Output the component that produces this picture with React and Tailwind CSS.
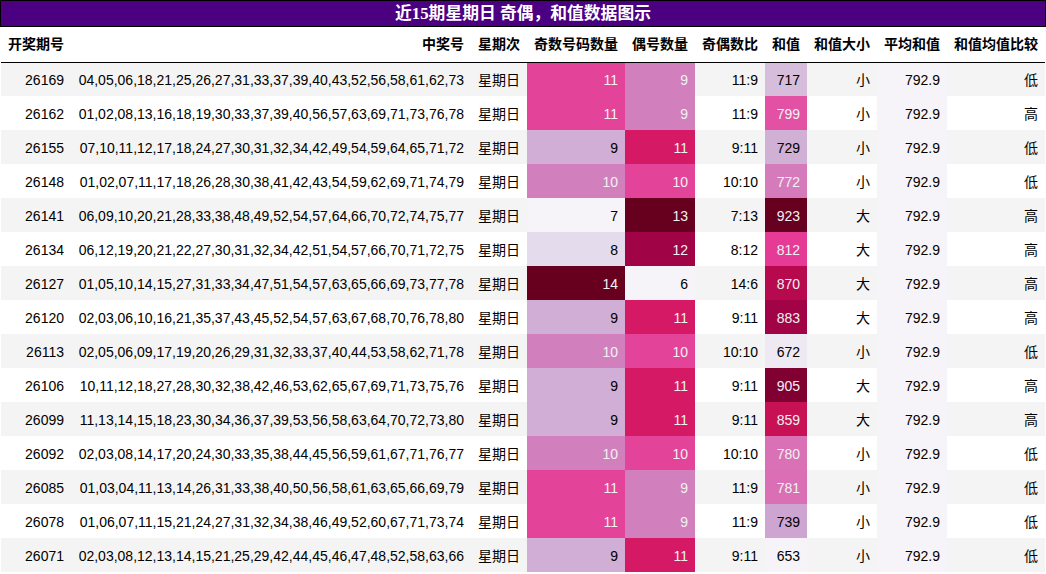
const rows = [
  ["26169", "04,05,06,18,21,25,26,27,31,33,37,39,40,43,52,56,58,61,62,73", 11, 9, 717, "小", "低"],
  ["26162", "01,02,08,13,16,18,19,30,33,37,39,40,56,57,63,69,71,73,76,78", 11, 9, 799, "小", "高"],
  ["26155", "07,10,11,12,17,18,24,27,30,31,32,34,42,49,54,59,64,65,71,72", 9, 11, 729, "小", "低"],
  ["26148", "01,02,07,11,17,18,26,28,30,38,41,42,43,54,59,62,69,71,74,79", 10, 10, 772, "小", "低"],
  ["26141", "06,09,10,20,21,28,33,38,48,49,52,54,57,64,66,70,72,74,75,77", 7, 13, 923, "大", "高"],
  ["26134", "06,12,19,20,21,22,27,30,31,32,34,42,51,54,57,66,70,71,72,75", 8, 12, 812, "大", "高"],
  ["26127", "01,05,10,14,15,27,31,33,34,47,51,54,57,63,65,66,69,73,77,78", 14, 6, 870, "大", "高"],
  ["26120", "02,03,06,10,16,21,35,37,43,45,52,54,57,63,67,68,70,76,78,80", 9, 11, 883, "大", "高"],
  ["26113", "02,05,06,09,17,19,20,26,29,31,32,33,37,40,44,53,58,62,71,78", 10, 10, 672, "小", "低"],
  ["26106", "10,11,12,18,27,28,30,32,38,42,46,53,62,65,67,69,71,73,75,76", 9, 11, 905, "大", "高"],
  ["26099", "11,13,14,15,18,23,30,34,36,37,39,53,56,58,63,64,70,72,73,80", 9, 11, 859, "大", "高"],
  ["26092", "02,03,08,14,17,20,24,30,33,35,38,44,45,56,59,61,67,71,76,77", 10, 10, 780, "小", "低"],
  ["26085", "01,03,04,11,13,14,26,31,33,38,40,50,56,58,61,63,65,66,69,79", 11, 9, 781, "小", "低"],
  ["26078", "01,06,07,11,15,21,24,27,31,32,34,38,46,49,52,60,67,71,73,74", 11, 9, 739, "小", "低"],
  ["26071", "02,03,08,12,13,14,15,21,25,29,42,44,45,46,47,48,52,58,63,66", 9, 11, 653, "小", "低"],
];

// PuRd gradient, precomputed per value
const oddColor = {
  7: "bg-[#f7f4f9] text-black",
  8: "bg-[#e4dbec] text-black",
  9: "bg-[#d1aed5] text-black",
  10: "bg-[#d280bd] text-[#f1f1f1]",
  11: "bg-[#e4439a] text-[#f1f1f1]",
  14: "bg-[#67001f] text-[#f1f1f1]",
};
const evenColor = {
  6: "bg-[#f7f4f9] text-black",
  9: "bg-[#d280bd] text-[#f1f1f1]",
  10: "bg-[#e4439a] text-[#f1f1f1]",
  11: "bg-[#d51965] text-[#f1f1f1]",
  12: "bg-[#a00346] text-[#f1f1f1]",
  13: "bg-[#67001f] text-[#f1f1f1]",
};
const sumColor = {
  653: "bg-[#f7f4f9] text-black",
  672: "bg-[#eee9f3] text-black",
  717: "bg-[#d6bddc] text-black",
  729: "bg-[#d1b0d5] text-black",
  739: "bg-[#cea5d0] text-black",
  772: "bg-[#d57bbb] text-[#f1f1f1]",
  780: "bg-[#da70b5] text-[#f1f1f1]",
  781: "bg-[#da6fb5] text-[#f1f1f1]",
  799: "bg-[#e251a4] text-[#f1f1f1]",
  812: "bg-[#e53a95] text-[#f1f1f1]",
  859: "bg-[#c81054] text-[#f1f1f1]",
  870: "bg-[#b70a4e] text-[#f1f1f1]",
  883: "bg-[#a20347] text-[#f1f1f1]",
  905: "bg-[#810032] text-[#f1f1f1]",
  923: "bg-[#67001f] text-[#f1f1f1]",
};

const headers = [
  ["开奖期号", "w-[70px]"],
  ["中奖号", "w-[400px]"],
  ["星期次", "w-[56px]"],
  ["奇数号码数量", "w-[98px]"],
  ["偶号数量", "w-[70px]"],
  ["奇偶数比", "w-[70px]"],
  ["和值", "w-[42px]"],
  ["和值大小", "w-[70px]"],
  ["平均和值", "w-[70px]"],
  ["和值均值比较", "w-[98px]"],
];

const cell = "h-[34px] px-[7px] pt-[2px] pb-0 text-right align-middle";

export default function App() {
  return (
    <div
      className="w-[1046px] bg-white text-[14px] text-black"
      style={{ fontFamily: '"Liberation Sans", "Noto Sans CJK SC", sans-serif' }}
    >
      <div
        className="h-[27px] border border-black bg-[#4b0082] text-center text-[16.8px] font-bold leading-[25px] text-white"
        style={{ fontFamily: '"Liberation Serif", "Noto Sans CJK SC", serif' }}
      >
        近15期星期日 奇偶，和值数据图示
      </div>
      <div className="pl-px">
        <table className="w-[1044px] table-fixed border-collapse">
          <thead>
            <tr className="border-b border-black">
              {headers.map(([h, w]) => (
                <th key={h} className={`${w} h-[35px] px-[7px] text-right align-middle font-bold whitespace-nowrap`}>
                  {h}
                </th>
              ))}
            </tr>
          </thead>
          <tbody>
            {rows.map((r, i) => (
              <tr key={r[0]} className={i % 2 === 0 ? "bg-[#f4f4f4]" : "bg-white"}>
                <td className={cell}>{r[0]}</td>
                <td className={`${cell} whitespace-nowrap`}>{r[1]}</td>
                <td className={cell}>星期日</td>
                <td className={`${cell} ${oddColor[r[2]]}`}>{r[2]}</td>
                <td className={`${cell} ${evenColor[r[3]]}`}>{r[3]}</td>
                <td className={cell}>{`${r[2]}:${r[3]}`}</td>
                <td className={`${cell} ${sumColor[r[4]]}`}>{r[4]}</td>
                <td className={cell}>{r[5]}</td>
                <td className={`${cell} bg-[#f7f4f9]`}>792.9</td>
                <td className={cell}>{r[6]}</td>
              </tr>
            ))}
          </tbody>
        </table>
      </div>
    </div>
  );
}
